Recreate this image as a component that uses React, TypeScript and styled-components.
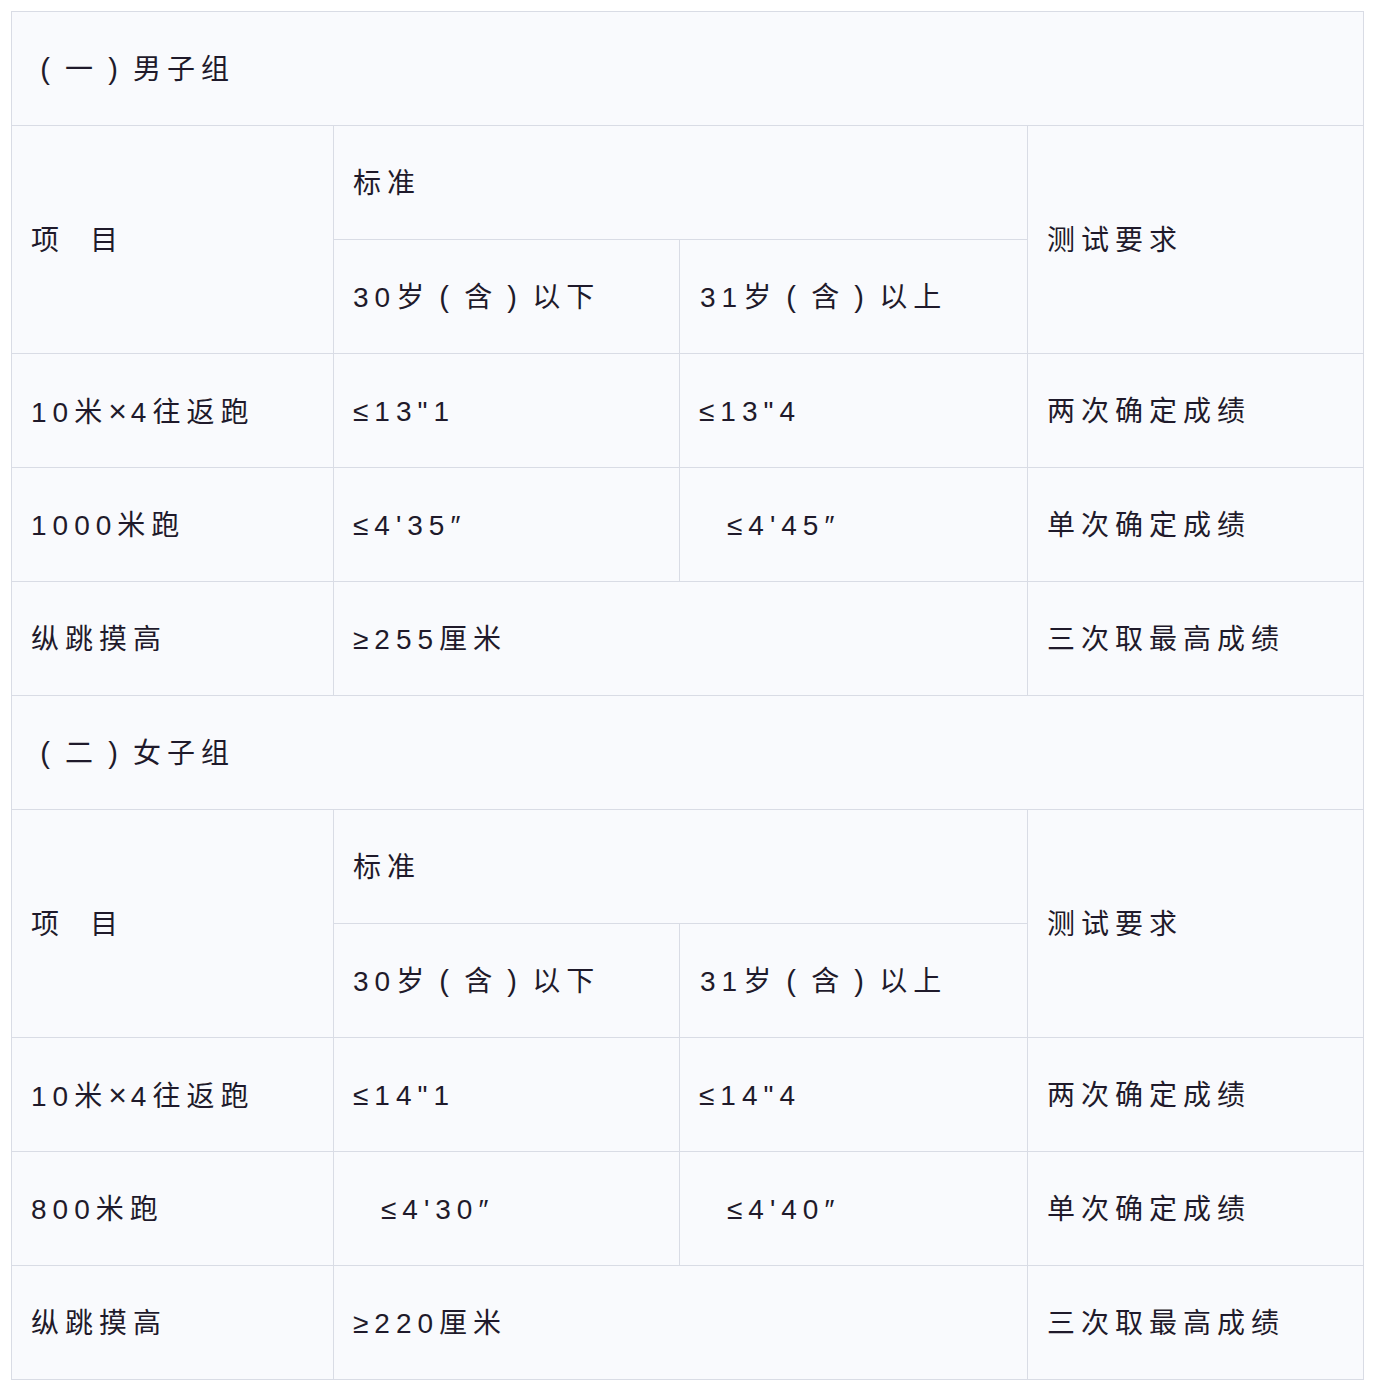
import React from "react"
import styled, { createGlobalStyle } from "styled-components"

const GlobalStyle = createGlobalStyle`
  html, body {
    margin: 0;
    padding: 0;
    background: #ffffff;
  }
  body {
    font-family: "Liberation Sans", "Noto Sans CJK SC", sans-serif;
    color: #1f1a2b;
  }
`

const Page = styled.div`
  padding: 11px 13px 13px 11px;
`

const Table = styled.table`
  width: 1352px;
  border-collapse: collapse;
  table-layout: fixed;
  background: #f9fafd;
  border: 1px solid #d9dce5;
`

const Row = styled.tr`
  height: 114px;
`

const Cell = styled.td<{ $indent?: number }>`
  border: 1px solid #d9dce5;
  padding: 2px 0 0 ${(p) => 19 + (p.$indent ?? 0)}px;
  vertical-align: middle;
  font-size: 28px;
  font-weight: 400;
  letter-spacing: 6px;
  line-height: 40px;
  white-space: nowrap;
  box-sizing: border-box;
`

// full-width bracket with the glyph centred in its box
const Paren = styled.span`
  display: inline-block;
  width: 28px;
  margin-right: 6px;
  text-align: center;
  letter-spacing: 0;
  font-family: "Liberation Sans", sans-serif;
  font-size: 29px;
`

// the × sign is drawn a little larger than the Latin default
const Times = styled.span`
  font-size: 32px;
  letter-spacing: 4px;
`

const Gap = styled.span`
  display: inline-block;
  width: 25px;
`

const rich = (text: string) =>
  text.split(/([()×])/).map((part, i) => {
    if (part === "(" || part === ")") return <Paren key={i}>{part}</Paren>
    if (part === "×") return <Times key={i}>{part}</Times>
    return <React.Fragment key={i}>{part}</React.Fragment>
  })

type DataRow = {
  item: string
  young: string
  old?: string
  youngIndent?: number
  oldIndent?: number
  rule: string
}

type Group = {
  title: string
  rows: DataRow[]
}

const groups: Group[] = [
  {
    title: "(一)男子组",
    rows: [
      { item: "10米×4往返跑", young: "≤13\"1", old: "≤13\"4", rule: "两次确定成绩" },
      { item: "1000米跑", young: "≤4'35″", old: "≤4'45″", oldIndent: 28, rule: "单次确定成绩" },
      { item: "纵跳摸高", young: "≥255厘米", rule: "三次取最高成绩" },
    ],
  },
  {
    title: "(二)女子组",
    rows: [
      { item: "10米×4往返跑", young: "≤14\"1", old: "≤14\"4", rule: "两次确定成绩" },
      { item: "800米跑", young: "≤4'30″", youngIndent: 28, old: "≤4'40″", oldIndent: 28, rule: "单次确定成绩" },
      { item: "纵跳摸高", young: "≥220厘米", rule: "三次取最高成绩" },
    ],
  },
]

const GroupRows = ({ group }: { group: Group }) => (
  <>
    <Row>
      <Cell colSpan={4}>{rich(group.title)}</Cell>
    </Row>
    <Row>
      <Cell rowSpan={2}>
        项<Gap />目
      </Cell>
      <Cell colSpan={2}>标准</Cell>
      <Cell rowSpan={2}>测试要求</Cell>
    </Row>
    <Row>
      <Cell>{rich("30岁(含)以下")}</Cell>
      <Cell $indent={1}>{rich("31岁(含)以上")}</Cell>
    </Row>
    {group.rows.map((r) => (
      <Row key={r.item}>
        <Cell>{rich(r.item)}</Cell>
        {r.old ? (
          <>
            <Cell $indent={r.youngIndent}>{r.young}</Cell>
            <Cell $indent={r.oldIndent}>{r.old}</Cell>
          </>
        ) : (
          <Cell colSpan={2}>{r.young}</Cell>
        )}
        <Cell>{r.rule}</Cell>
      </Row>
    ))}
  </>
)

export default function App() {
  return (
    <Page>
      <GlobalStyle />
      <Table>
        <colgroup>
          <col style={{ width: 322 }} />
          <col style={{ width: 346 }} />
          <col style={{ width: 348 }} />
          <col style={{ width: 336 }} />
        </colgroup>
        <tbody>
          {groups.map((g) => (
            <GroupRows key={g.title} group={g} />
          ))}
        </tbody>
      </Table>
    </Page>
  )
}
